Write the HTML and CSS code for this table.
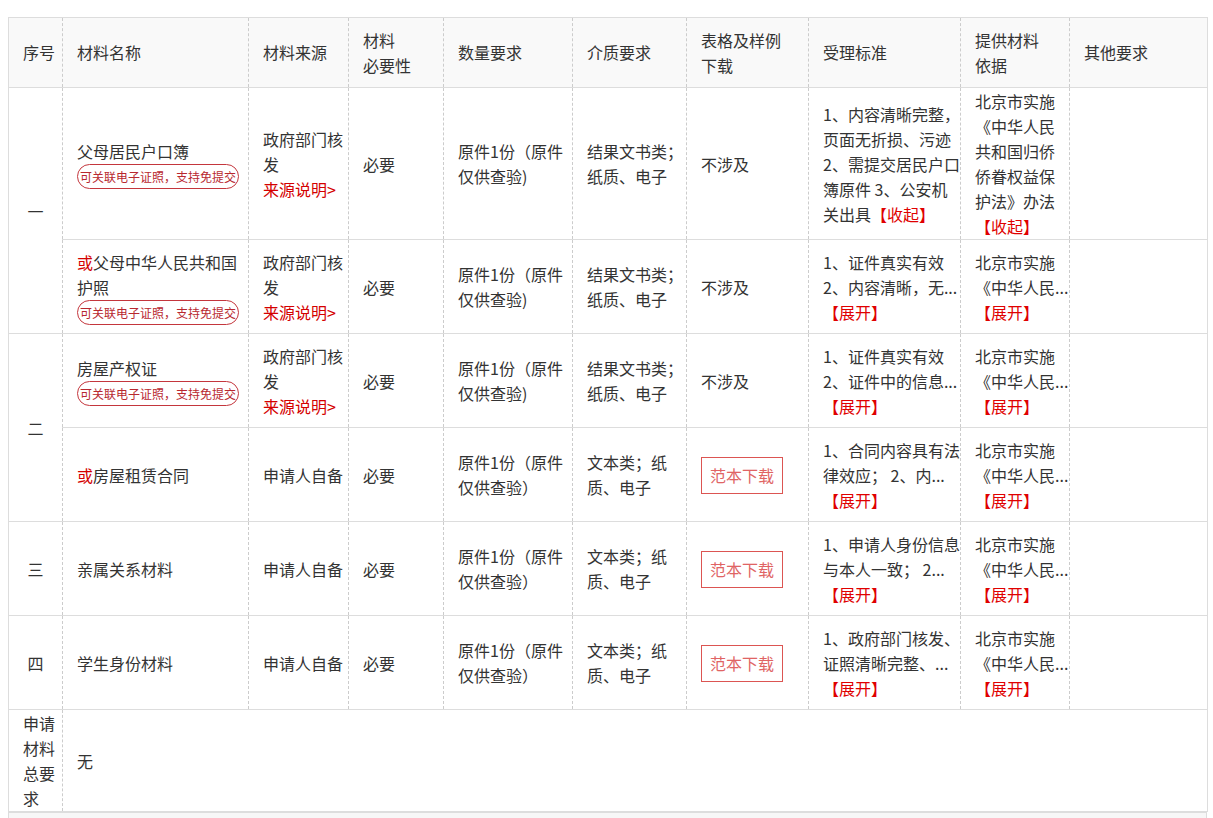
FILE: index.html
```html
<!DOCTYPE html>
<html lang="zh-CN">
<head>
<meta charset="utf-8">
<title>申请材料</title>
<link rel="stylesheet" href="styles.css">
</head>
<body>
<div class="page">
  <table class="mat">
    <colgroup>
      <col class="c1"><col class="c2"><col class="c3"><col class="c4"><col class="c5">
      <col class="c6"><col class="c7"><col class="c8"><col class="c9"><col class="c10">
    </colgroup>
    <thead>
      <tr class="head">
        <th>序号</th>
        <th>材料名称</th>
        <th>材料来源</th>
        <th>材料<br>必要性</th>
        <th>数量要求</th>
        <th>介质要求</th>
        <th>表格及样例<br>下载</th>
        <th>受理标准</th>
        <th>提供材料<br>依据</th>
        <th>其他要求</th>
      </tr>
    </thead>
    <tbody>
      <tr class="row">
        <td class="idx" rowspan="2">一</td>
        <td>父母居民户口簿<span class="badge">可关联电子证照，支持免提交</span></td>
        <td>政府部门核发<br><a class="src">来源说明&gt;</a></td>
        <td>必要</td>
        <td>原件1份（原件仅供查验)</td>
        <td>结果文书类；纸质、电子</td>
        <td>不涉及</td>
        <td>1、内容清晰完整，页面无折损、污迹 2、需提交居民户口簿原件 3、公安机关出具<a class="tog">【收起】</a></td>
        <td>北京市实施《中华人民共和国归侨侨眷权益保护法》办法<a class="tog">【收起】</a></td>
        <td></td>
      </tr>
      <tr class="row">
        <td><span class="or">或</span>父母中华人民共和国护照<span class="badge">可关联电子证照，支持免提交</span></td>
        <td>政府部门核发<br><a class="src">来源说明&gt;</a></td>
        <td>必要</td>
        <td>原件1份（原件仅供查验)</td>
        <td>结果文书类；纸质、电子</td>
        <td>不涉及</td>
        <td>1、证件真实有效 2、内容清晰，无...<br><a class="tog">【展开】</a></td>
        <td>北京市实施《中华人民...<br><a class="tog">【展开】</a></td>
        <td></td>
      </tr>
      <tr class="row">
        <td class="idx" rowspan="2">二</td>
        <td>房屋产权证<span class="badge">可关联电子证照，支持免提交</span></td>
        <td>政府部门核发<br><a class="src">来源说明&gt;</a></td>
        <td>必要</td>
        <td>原件1份（原件仅供查验)</td>
        <td>结果文书类；纸质、电子</td>
        <td>不涉及</td>
        <td>1、证件真实有效 2、证件中的信息...<br><a class="tog">【展开】</a></td>
        <td>北京市实施《中华人民...<br><a class="tog">【展开】</a></td>
        <td></td>
      </tr>
      <tr class="row">
        <td><span class="or">或</span>房屋租赁合同</td>
        <td>申请人自备</td>
        <td>必要</td>
        <td>原件1份（原件仅供查验）</td>
        <td>文本类；纸质、电子</td>
        <td><a class="dl">范本下载</a></td>
        <td>1、合同内容具有法律效应； 2、内...<br><a class="tog">【展开】</a></td>
        <td>北京市实施《中华人民...<br><a class="tog">【展开】</a></td>
        <td></td>
      </tr>
      <tr class="row">
        <td class="idx">三</td>
        <td>亲属关系材料</td>
        <td>申请人自备</td>
        <td>必要</td>
        <td>原件1份（原件仅供查验）</td>
        <td>文本类；纸质、电子</td>
        <td><a class="dl">范本下载</a></td>
        <td>1、申请人身份信息与本人一致； 2...<br><a class="tog">【展开】</a></td>
        <td>北京市实施《中华人民...<br><a class="tog">【展开】</a></td>
        <td></td>
      </tr>
      <tr class="row">
        <td class="idx">四</td>
        <td>学生身份材料</td>
        <td>申请人自备</td>
        <td>必要</td>
        <td>原件1份（原件仅供查验）</td>
        <td>文本类；纸质、电子</td>
        <td><a class="dl">范本下载</a></td>
        <td>1、政府部门核发、证照清晰完整、...<br><a class="tog">【展开】</a></td>
        <td>北京市实施《中华人民...<br><a class="tog">【展开】</a></td>
        <td></td>
      </tr>
      <tr class="total">
        <td>申请材料总要求</td>
        <td colspan="9">无</td>
      </tr>
    </tbody>
  </table>
  <div class="next"></div>
</div>
</body>
</html>
```

FILE: styles.css
```css
* { box-sizing: border-box; }
html, body { margin: 0; padding: 0; background: #fff; }
body {
  font-family: "Noto Sans CJK SC", "Microsoft YaHei", sans-serif;
  font-size: 16px;
  line-height: 25px;
  color: #333;
}
.page {
  padding: 17px 6px 0 8px;
}
.mat {
  width: 1199px;
  table-layout: fixed;
  border-collapse: collapse;
  border: 1px solid #ddd;
}
.c1 { width: 54px; }
.c2 { width: 186px; }
.c3 { width: 100px; }
.c4 { width: 95px; }
.c5 { width: 129px; }
.c6 { width: 114px; }
.c7 { width: 122px; }
.c8 { width: 152px; }
.c9 { width: 109px; }
.c10 { width: 138px; }
.mat th, .mat td {
  padding: 0 0 0 14px;
  text-align: left;
  vertical-align: middle;
  font-weight: normal;
  border-left: 1px dashed #ccc;
  border-right: 1px dashed #ccc;
  border-top: 1px solid #ddd;
  border-bottom: 1px solid #ddd;
}
.head th {
  background: #f9f9f9;
  height: 70px;
}
.row td {
  height: 94px;
  padding-top: 1px;
}
.mat td.idx { text-align: center; padding-left: 0; }
.total td { height: 101px; padding-top: 1px; }
.badge {
  display: block;
  width: 162px;
  height: 25px;
  border: 1px solid #c4363d;
  border-radius: 13px;
  padding: 0 2px;
  font-size: 12px;
  line-height: 23px;
  color: #b8282f;
  white-space: nowrap;
}
.or { color: #d40000; }
.src { color: #d40000; text-decoration: none; }
.tog { color: #e00000; text-decoration: none; }
.dl {
  display: inline-block;
  height: 37px;
  padding: 5px 8px;
  border: 1px solid #dc5552;
  color: #e06464;
  text-decoration: none;
  line-height: 25px;
}
.next {
  width: 1199px;
  height: 20px;
  border: 1px solid #ddd;
  background: #f7f7f7;
}
```
